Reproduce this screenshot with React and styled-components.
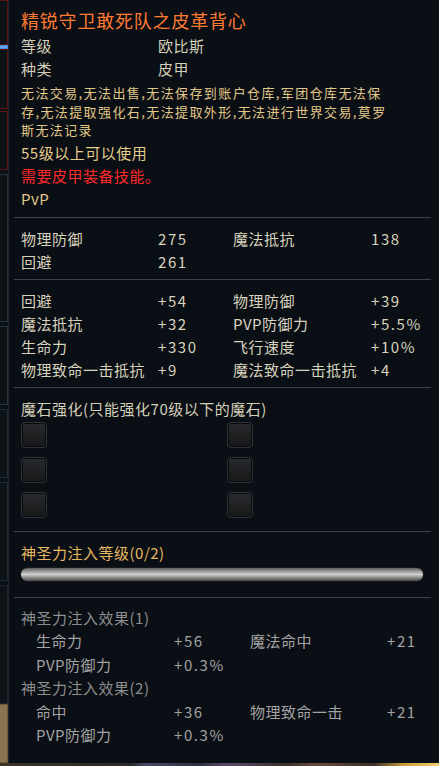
import React from "react";
import styled, { createGlobalStyle } from "styled-components";

const Global = createGlobalStyle`
  html, body { margin: 0; padding: 0; background: #10151b; }
  body { width: 439px; height: 766px; overflow: hidden; }
  #root { width: 439px; height: 766px; }
`;

const Page = styled.div`
  display: flex;
  flex-direction: column;
  width: 439px;
  height: 766px;
  font-family: "Noto Sans CJK SC", "Noto Sans", sans-serif;
`;

const Main = styled.div`
  display: flex;
  height: 763px;
`;

const Strip = styled.div`
  width: 8px;
  display: flex;
  flex-direction: column;
  background: #0c1116;
`;

const StripBox = styled.div`
  height: ${(p) => p.$h}px;
  box-sizing: border-box;
  border: 1px solid ${(p) => p.$c};
  border-left: none;
  background: ${(p) => p.$bg || "#0d1217"};
  margin-bottom: ${(p) => p.$mb || 0}px;
`;

const Bottom = styled.div`
  height: 3px;
  background: linear-gradient(
    to right,
    #3a3426 0%, #2a2a2a 30%, #4a4a6a 33%, #2c3040 45%, #5a4a6a 52%,
    #3a2f2a 65%, #6a4a3a 72%, #3a2e26 85%, #c99a3a 92%, #f2d070 100%
  );
`;

const Panel = styled.div`
  flex: 1;
  box-sizing: border-box;
  height: 763px;
  background: #0a0e15;
  border-left: 1px solid #1d2530;
  padding: 8px 8px 0 5px;
  display: flex;
  flex-direction: column;
`;

const Section = styled.div`
  padding-left: 7px;
  margin-top: ${(p) => p.$mt || 0}px;
`;

const Title = styled.div`
  font-size: 18px;
  line-height: 24px;
  letter-spacing: 0.8px;
  color: #ff7b30;
  white-space: nowrap;
`;

const InfoGrid = styled.div`
  display: grid;
  grid-template-columns: 137px auto;
  font-size: 15px;
  line-height: 23px;
  letter-spacing: 0.5px;
  color: #d4cfb8;
`;

const Line = styled.div`
  font-size: ${(p) => p.$fs || 15}px;
  line-height: ${(p) => p.$lh || 23}px;
  letter-spacing: ${(p) => p.$ls ?? 0.5}px;
  color: ${(p) => p.$c};
  white-space: nowrap;
`;

const Divider = styled.div`
  height: 1px;
  background: #394150;
  margin-top: ${(p) => p.$mt}px;
`;

const StatGrid = styled.div`
  display: grid;
  grid-template-columns: ${(p) => p.$cols};
  grid-auto-rows: ${(p) => p.$rh}px;
  align-items: center;
  font-size: 15px;
  letter-spacing: 0.5px;
  color: ${(p) => p.$c};
  padding-left: ${(p) => p.$indent || 0}px;
  white-space: nowrap;
`;

const Num = styled.span`
  letter-spacing: 1.6px;
`;

const SlotGrid = styled.div`
  display: grid;
  grid-template-columns: 206px 26px;
  grid-auto-rows: 26px;
  row-gap: 9px;
  margin-top: 2px;
`;

const Slot = styled.div`
  box-sizing: border-box;
  width: 26px;
  height: 26px;
  border-radius: 4px;
  border: 1px solid #30323a;
  box-shadow: inset 0 0 0 1px #0a0a0c;
  background: linear-gradient(to bottom, #2a2b2e 0%, #1e1f21 60%, #17181a 100%);
`;

const Bar = styled.div`
  box-sizing: border-box;
  margin: 3px 0 0 -1px;
  width: 404px;
  height: 15px;
  border-radius: 8px;
  border: 1px solid #1a1b1d;
  background: linear-gradient(
    to bottom,
    #5c5c5c 0%,
    #9a9a9a 25%,
    #cfcfcf 50%,
    #8a8a8a 75%,
    #4a4a4a 100%
  );
`;

const stats1 = [
  ["物理防御", "275", "魔法抵抗", "138"],
  ["回避", "261", "", ""],
];
const stats2 = [
  ["回避", "+54", "物理防御", "+39"],
  ["魔法抵抗", "+32", "PVP防御力", "+5.5%"],
  ["生命力", "+330", "飞行速度", "+10%"],
  ["物理致命一击抵抗", "+9", "魔法致命一击抵抗", "+4"],
];

function Rows({ rows }) {
  return rows.map((r, i) => (
    <React.Fragment key={i}>
      <span>{r[0]}</span>
      <Num>{r[1]}</Num>
      <span>{r[2]}</span>
      <Num>{r[3]}</Num>
    </React.Fragment>
  ));
}

const descLines = [
  "无法交易,无法出售,无法保存到账户仓库,军团仓库无法保",
  "存,无法提取强化石,无法提取外形,无法进行世界交易,莫罗",
  "斯无法记录",
];

export default function App() {
  return (
    <Page>
      <Global />
      <Main>
        <Strip>
          <StripBox $h={46} $c="#5a1414" />
          <StripBox $h={4} $c="#4a8ad8" $bg="#6aa8ee" />
          <StripBox $h={60} $c="#5a1414" $mb={2} />
          <StripBox $h={60} $c="#5a1414" $mb={4} />
          <StripBox $h={150} $c="#26313c" $mb={4} />
          <StripBox $h={80} $c="#2a3540" $mb={4} />
          <StripBox $h={70} $c="#1f2a34" $mb={4} />
          <StripBox $h={100} $c="#1f2a34" $mb={4} />
          <StripBox $h={120} $c="#1d2630" $mb={0} />
          <StripBox $h={60} $c="#6a5a3a" $bg="#8a7450" />
        </Strip>
        <Panel>
          <Section>
            <Title>精锐守卫敢死队之皮革背心</Title>
          </Section>
          <Section $mt={2}>
            <InfoGrid>
              <span>等级</span>
              <span>欧比斯</span>
              <span>种类</span>
              <span>皮甲</span>
            </InfoGrid>
          </Section>
          <Section $mt={4}>
            {descLines.map((t) => (
              <Line key={t} $fs={13} $lh={18.5} $ls={1.4} $c="#e2c887">
                {t}
              </Line>
            ))}
          </Section>
          <Section $mt={1}>
            <Line $c="#e6cd8a">55级以上可以使用</Line>
            <Line $c="#ff2a2a">需要皮甲装备技能。</Line>
            <Line $c="#e0c78a">PvP</Line>
          </Section>
          <Divider $mt={7} />
          <Section $mt={9}>
            <StatGrid $cols="137px 75px 138px auto" $rh={23} $c="#d8d3bd">
              <Rows rows={stats1} />
            </StatGrid>
          </Section>
          <Divider $mt={6} />
          <Section $mt={9}>
            <StatGrid $cols="137px 75px 138px auto" $rh={23} $c="#d8d3bd">
              <Rows rows={stats2} />
            </StatGrid>
          </Section>
          <Divider $mt={6} />
          <Section $mt={9}>
            <Line $c="#d4cfb8">魔石强化(只能强化70级以下的魔石)</Line>
            <SlotGrid>
              {Array.from({ length: 6 }).map((_, i) => (
                <Slot key={i} />
              ))}
            </SlotGrid>
          </Section>
          <Divider $mt={13} />
          <Section $mt={9}>
            <Line $c="#e6b860">神圣力注入等级(0/2)</Line>
            <Bar />
          </Section>
          <Divider $mt={15} />
          <Section $mt={8}>
            <Line $lh={23.5} $c="#8e8e8e">神圣力注入效果(1)</Line>
            <StatGrid $cols="138px 76px 137px auto" $rh={23.5} $c="#a3a3a3" $indent={15}>
              <Rows rows={[["生命力", "+56", "魔法命中", "+21"], ["PVP防御力", "+0.3%", "", ""]]} />
            </StatGrid>
            <Line $lh={23.5} $c="#8e8e8e">神圣力注入效果(2)</Line>
            <StatGrid $cols="138px 76px 137px auto" $rh={23.5} $c="#a3a3a3" $indent={15}>
              <Rows rows={[["命中", "+36", "物理致命一击", "+21"], ["PVP防御力", "+0.3%", "", ""]]} />
            </StatGrid>
          </Section>
        </Panel>
      </Main>
      <Bottom />
    </Page>
  );
}
